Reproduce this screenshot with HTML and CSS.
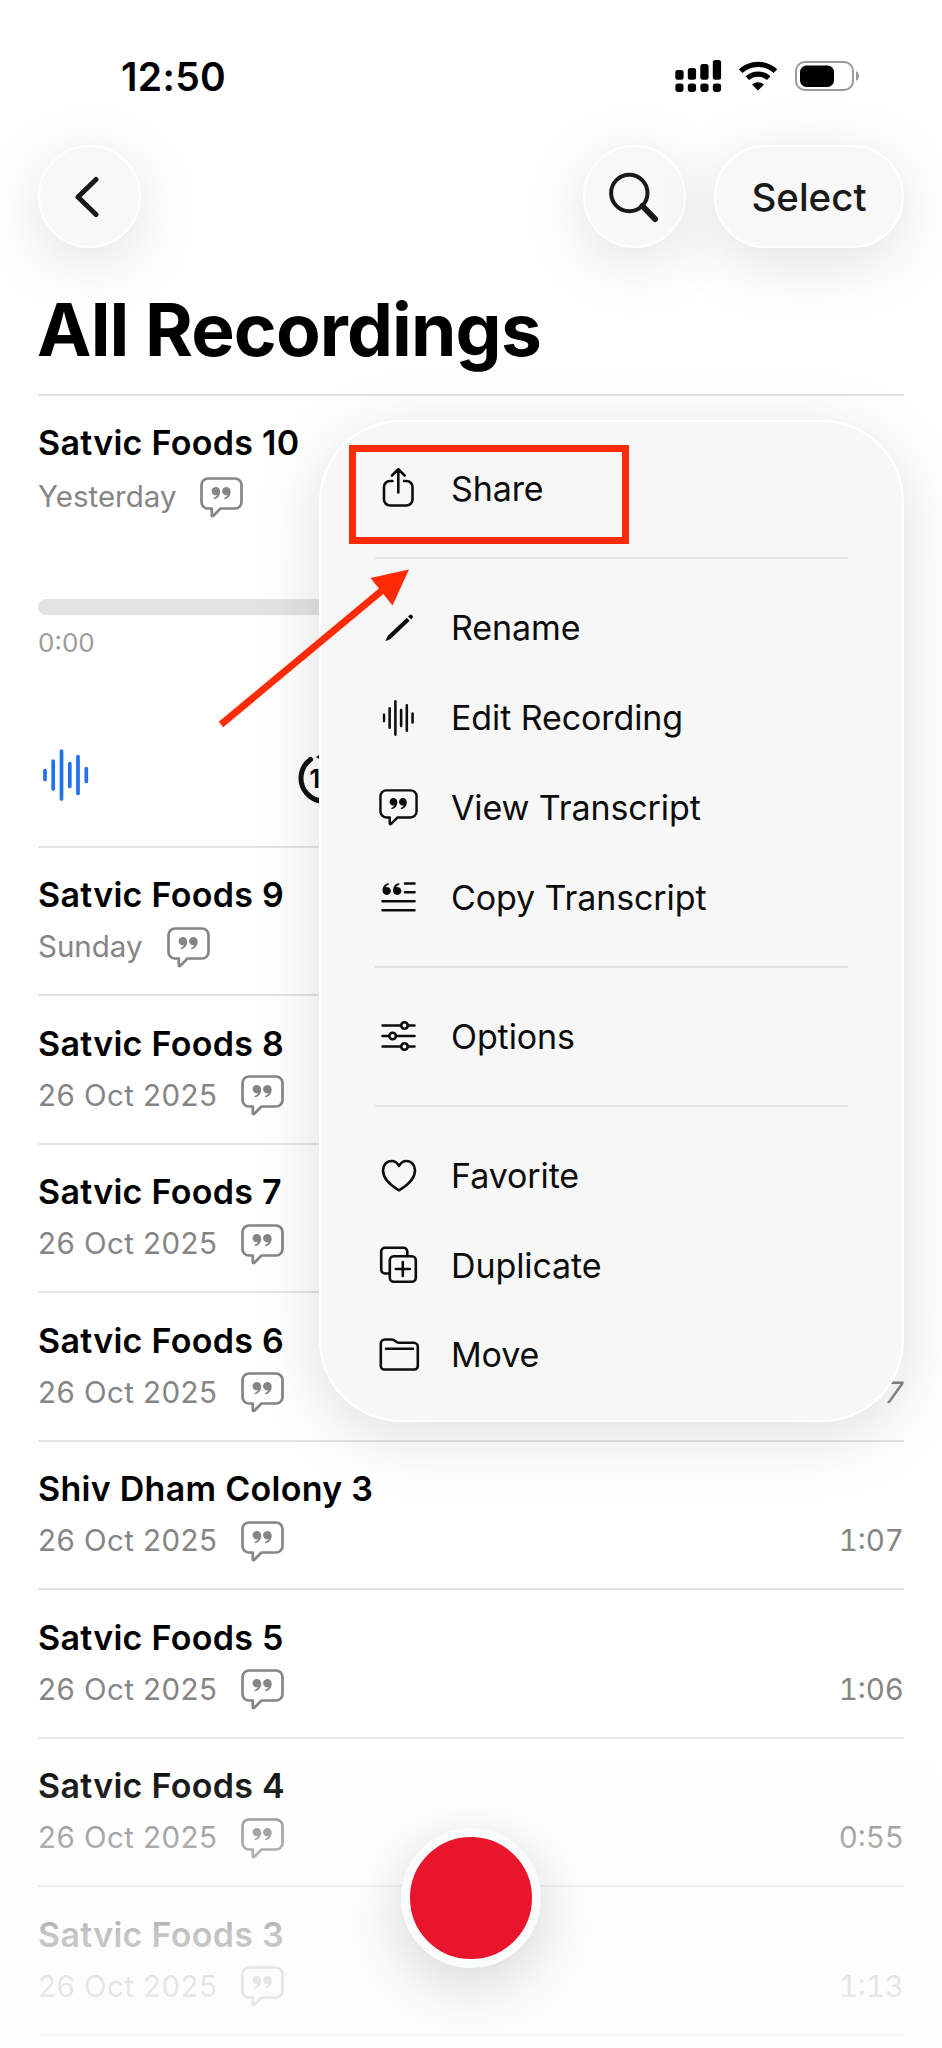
FILE: index.html
```html
<!DOCTYPE html>
<html lang="en">
<head>
    <meta charset="UTF-8">
    <meta name="viewport" content="width=device-width, initial-scale=1.0">
    <title>All Recordings</title>
    <link rel="stylesheet" href="styles.css">
</head>
<body>
    <svg class="symbols" width="0" height="0">
        <symbol id="quote" viewBox="0 0 10 14">
            <path d="M4.6 1a4 4 0 1 0 1.3 7.8c-.5 1.3-1.5 2-2.8 2.5-1 .4-.7 1.6.3 1.4C6.8 12 9 9.200 9 5.400 9 2.700 7.200 1 4.600 1z" fill="currentColor"/>
        </symbol>
        <symbol id="transcript" viewBox="0 0 43 41">
            <path d="M8 1.500h27a6.500 6.500 0 0 1 6.500 6.500v17a6.500 6.500 0 0 1-6.500 6.500H20.500l-7.200 7.200c-.8.7-1.500.5-1.500-.5V31.500H8A6.500 6.500 0 0 1 1.500 25V8A6.500 6.500 0 0 1 8 1.500z" fill="none" stroke="currentColor" stroke-width="2.700" stroke-linejoin="round"/>
            <use href="#quote" x="10.800" y="9" width="10.500" height="14.500"/>
            <use href="#quote" x="21.300" y="9" width="10.500" height="14.500"/>
        </symbol>
        <symbol id="wave" viewBox="0 0 46 52">
            <path d="M2 21.500v9M10.200 12v28M18.500 2v48M26.800 14.500v23M35 7.500v37M43.300 19.500v13" fill="none" stroke="currentColor" stroke-width="3.700" stroke-linecap="round"/>
        </symbol>
    </svg>

    <div class="phone">
        <div class="status-bar">
            <span class="time">12:50</span>
            <svg class="status-icons" width="186" height="34" viewBox="0 0 186 34">
                <g>
                    <rect x="0.300" y="11" width="8.300" height="9.700" rx="2.500"/>
                    <rect x="12.800" y="9" width="8.300" height="11.700" rx="2.500"/>
                    <rect x="25.300" y="5" width="8.300" height="15.700" rx="2.500"/>
                    <rect x="37.800" y="1" width="8.300" height="19.700" rx="2.500"/>
                    <rect x="0.300" y="24.600" width="8.300" height="8.300" rx="2.800"/>
                    <rect x="12.800" y="24.600" width="8.300" height="8.300" rx="2.800"/>
                    <rect x="25.300" y="24.600" width="8.300" height="8.300" rx="2.800"/>
                    <rect x="37.800" y="24.600" width="8.300" height="8.300" rx="2.800"/>
                </g>
                <path d="M65.600 12.200a25.500 25.500 0 0 1 34.800 0M72.300 19.200a15.800 15.800 0 0 1 21.400 0" fill="none" stroke="#000" stroke-width="5.200"/>
                <path d="M83 31.400l-6-6a9.500 9.500 0 0 1 12 0z"/>
                <rect x="121" y="3" width="57" height="28" rx="9" fill="none" stroke="#999" stroke-width="2"/>
                <rect x="125" y="6.500" width="34" height="21.500" rx="6.500"/>
                <path d="M181 12.200v9.600c4-1.800 4-7.800 0-9.600z" fill="#999"/>
            </svg>
        </div>

        <div class="nav">
            <div class="glass round">
                <svg width="26" height="42" viewBox="0 0 26 42">
                    <path d="M22 3.500L4 21l18 17.500" fill="none" stroke="#1a1a1a" stroke-width="5" stroke-linecap="round" stroke-linejoin="round"/>
                </svg>
            </div>
            <div class="nav-right">
                <div class="glass round">
                    <svg width="52" height="52" viewBox="0 0 52 52">
                        <circle cx="21.300" cy="22" r="18.200" fill="none" stroke="#1a1a1a" stroke-width="4"/>
                        <path d="M34.500 35l12.500 13" stroke="#1a1a1a" stroke-width="6" stroke-linecap="round"/>
                    </svg>
                </div>
                <div class="glass select">Select</div>
            </div>
        </div>

        <h1>All Recordings</h1>

        <div class="list">
            <div class="row open">
                <div class="name">Satvic Foods 10</div>
                <div class="meta">
                    <span class="date day">Yesterday</span>
                    <svg class="bubble"><use href="#transcript"/></svg>
                </div>
                <div class="slider"></div>
                <div class="elapsed">0:00</div>
                <div class="controls">
                    <svg class="wave"><use href="#wave"/></svg>
                    <svg class="skip" width="56" height="56" viewBox="0 0 56 56">
                        <path d="M14.500 7.500A23 23 0 1 0 41.500 7.500" fill="none" stroke="#111" stroke-width="5" stroke-linecap="round"/>
                        <path d="M20 5l8-5v10z" fill="#111"/>
                        <text x="13.500" y="35.500">15</text>
                    </svg>
                </div>
            </div>
            <div class="row">
                <div class="name">Satvic Foods 9</div>
                <div class="meta">
                    <span class="date day">Sunday</span>
                    <svg class="bubble"><use href="#transcript"/></svg>
                </div>
            </div>
            <div class="row">
                <div class="name">Satvic Foods 8</div>
                <div class="meta">
                    <span class="date">26 Oct 2025</span>
                    <svg class="bubble"><use href="#transcript"/></svg>
                </div>
            </div>
            <div class="row">
                <div class="name">Satvic Foods 7</div>
                <div class="meta">
                    <span class="date">26 Oct 2025</span>
                    <svg class="bubble"><use href="#transcript"/></svg>
                </div>
            </div>
            <div class="row">
                <div class="name">Satvic Foods 6</div>
                <div class="meta">
                    <span class="date">26 Oct 2025</span>
                    <svg class="bubble"><use href="#transcript"/></svg>
                    <span class="length bent">7</span>
                </div>
            </div>
            <div class="row">
                <div class="name">Shiv Dham Colony 3</div>
                <div class="meta">
                    <span class="date">26 Oct 2025</span>
                    <svg class="bubble"><use href="#transcript"/></svg>
                    <span class="length">1:07</span>
                </div>
            </div>
            <div class="row">
                <div class="name">Satvic Foods 5</div>
                <div class="meta">
                    <span class="date">26 Oct 2025</span>
                    <svg class="bubble"><use href="#transcript"/></svg>
                    <span class="length">1:06</span>
                </div>
            </div>
            <div class="row">
                <div class="name">Satvic Foods 4</div>
                <div class="meta">
                    <span class="date">26 Oct 2025</span>
                    <svg class="bubble"><use href="#transcript"/></svg>
                    <span class="length">0:55</span>
                </div>
            </div>
            <div class="row">
                <div class="name">Satvic Foods 3</div>
                <div class="meta">
                    <span class="date">26 Oct 2025</span>
                    <svg class="bubble"><use href="#transcript"/></svg>
                    <span class="length">1:13</span>
                </div>
            </div>
        </div>

        <div class="fade"></div>
        <div class="record"></div>

        <div class="menu">
            <div class="item">
                <svg class="icon" viewBox="0 0 42 42">
                    <path d="M14.500 13H12a6 6 0 0 0-6 6v12.500a6 6 0 0 0 6 6h16.500a6 6 0 0 0 6-6V19a6 6 0 0 0-6-6H26M20.300 24.500V2M14 7.500l6.300-6.300 6.300 6.300"/>
                </svg>
                <span>Share</span>
            </div>
            <hr>
            <div class="item">
                <svg class="icon solid" viewBox="0 0 42 42">
                    <path d="M7.500 34.300l2-5.300L28.800 10.700l2.900 3L12.500 32z"/>
                    <path d="M30 9.500l1.300-1.300a2.200 2.200 0 0 1 3.100 3.100L33.100 12.600z"/>
                </svg>
                <span>Rename</span>
            </div>
            <div class="item">
                <svg class="icon" viewBox="0 0 42 42"><use href="#wave" x="4.500" y="3" width="32" height="36"/></svg>
                <span>Edit Recording</span>
            </div>
            <div class="item">
                <svg class="icon" viewBox="0 0 42 42"><use href="#transcript" x="1" y="3" width="39" height="37"/></svg>
                <span>View Transcript</span>
            </div>
            <div class="item">
                <svg class="icon" viewBox="0 0 42 42">
                    <use href="#quote" x="-13.500" y="-20" width="10" height="14" transform="rotate(180)"/>
                    <use href="#quote" x="-24" y="-20" width="10" height="14" transform="rotate(180)"/>
                    <path d="M27 7.500h9.500M27 16.300h9.500M4.500 25.300h32M4.500 34.200h32"/>
                </svg>
                <span>Copy Transcript</span>
            </div>
            <hr>
            <div class="item">
                <svg class="icon" viewBox="0 0 42 42">
                    <path d="M4.500 10.500h18.500M30 10.500h6.500M4.500 21h6.500M18.500 21h18M4.500 31.500h18.500M30 31.500h6.500"/>
                    <circle cx="26.500" cy="10.500" r="3.300"/>
                    <circle cx="14.600" cy="21" r="3.300"/>
                    <circle cx="26.500" cy="31.500" r="3.300"/>
                </svg>
                <span>Options</span>
            </div>
            <hr>
            <div class="item">
                <svg class="icon" viewBox="0 0 42 42">
                    <path d="M21 36.300C12 31 5 24.500 5 16.500 5 11 8.800 7 13.500 7c3.300 0 5.900 1.900 7.500 5 1.600-3.100 4.200-5 7.500-5C33.200 7 37 11 37 16.500 37 24.500 30 31 21 36.300z"/>
                </svg>
                <span>Favorite</span>
            </div>
            <div class="item">
                <svg class="icon" viewBox="0 0 42 42">
                    <path d="M11.500 29.500H7A3.800 3.800 0 0 1 3.200 25.700V7.500A3.800 3.800 0 0 1 7 3.700h18.500a3.800 3.800 0 0 1 3.800 3.800V12"/>
                    <rect x="11.800" y="12.200" width="26" height="25.500" rx="4"/>
                    <path d="M24.800 18v14M17.800 25h14"/>
                </svg>
                <span>Duplicate</span>
            </div>
            <div class="item">
                <svg class="icon" viewBox="0 0 42 42">
                    <path d="M2.800 32V9.500a4 4 0 0 1 4-4h6.500c3.800 0 4.500 3.200 7.500 3.200h15a4 4 0 0 1 4 4V32a3.500 3.500 0 0 1-3.500 3.500H6.300A3.500 3.500 0 0 1 2.800 32zM8 14.800h27"/>
                </svg>
                <span>Move</span>
            </div>
        </div>

        <div class="highlight"></div>
        <svg class="arrow" width="192" height="160" viewBox="0 0 192 160">
            <path d="M3 156.500L167 20" stroke="#ff2a06" stroke-width="7"/>
            <path d="M191 1.500L152.500 10l22 27.500z" fill="#ff2a06"/>
        </svg>
    </div>
</body>
</html>
```
FILE: styles.css
```css
body {
    margin: 0;
    background-color: #ffffff;
    color: #000000;
    font-family: Inter, "Liberation Sans", sans-serif;
}

.symbols {
    position: absolute;
}

.phone {
    position: relative;
    width: 942px;
    height: 2048px;
    overflow: hidden;
}

/* Status bar */
.status-bar {
    display: flex;
    justify-content: space-between;
    box-sizing: border-box;
    height: 145px;
    padding: 56px 81px 0 121px;
}

.time {
    font-size: 39px;
    font-weight: 600;
    line-height: 41px;
    letter-spacing: 0.3px;
}

.status-icons {
    margin-top: 3px;
}

/* Navigation */
.nav {
    display: flex;
    justify-content: space-between;
    padding: 0 38px;
}

.nav-right {
    display: flex;
    gap: 28px;
}

.glass {
    display: flex;
    align-items: center;
    justify-content: center;
    box-sizing: border-box;
    height: 103px;
    border: 2px solid #ffffff;
    border-radius: 52px;
    background-color: #f8f8f8;
    box-shadow: 0 14px 66px rgba(0, 0, 0, 0.12);
}

.round {
    width: 103px;
}

.round svg {
    margin-right: 6px;
}

.nav-right .round svg {
    margin-right: 2px;
}

.select {
    width: 190px;
    color: #1a1a1a;
    font-size: 38.5px;
    font-weight: 500;
}

h1 {
    margin: 0 38px;
    padding: 45px 0 28px;
    border-bottom: 2px solid #e4e4e4;
    font-size: 73px;
    font-weight: 700;
    line-height: 73px;
    letter-spacing: -0.85px;
    text-indent: -1px;
}

/* Recordings */
.list {
    padding: 0 38px;
}

.row {
    box-sizing: border-box;
    height: 148.5px;
    padding-top: 27.500px;
    border-bottom: 2px solid #e4e4e4;
}

.row.open {
    height: 451.5px;
    padding-top: 27px;
}

.name {
    font-size: 34px;
    font-weight: 600;
    line-height: 40px;
    letter-spacing: 0.28px;
}

.meta {
    display: flex;
    align-items: center;
    height: 40px;
    margin-top: 12px;
    color: #858585;
}

.open .meta {
    margin-top: 14px;
}

.date,
.length {
    padding-bottom: 2px;
    font-size: 29.500px;
    line-height: 38px;
}

.date {
    letter-spacing: 0.45px;
}

.day {
    letter-spacing: 0;
}

.length {
    margin-left: auto;
    font-variant-numeric: tabular-nums;
}

.bent {
    transform: skewX(-12deg);
}

.bubble {
    width: 43px;
    height: 41px;
    margin-left: 24px;
}

.slider {
    height: 16px;
    margin-top: 82px;
    border-radius: 8px;
    background-color: #e3e3e3;
}

.elapsed {
    margin-top: 13px;
    color: #9c9c9c;
    font-size: 26px;
    line-height: 30px;
}

.controls {
    display: flex;
    align-items: center;
    height: 60px;
    margin-top: 87px;
    padding-left: 5px;
}

.wave {
    width: 46px;
    height: 52px;
    color: #2470ea;
}

.skip {
    margin: 10px 0 0 207px;
}

.skip text {
    font-size: 25px;
    font-weight: 600;
}

.fade {
    position: absolute;
    left: 0;
    bottom: 0;
    width: 100%;
    height: 308px;
    background: linear-gradient(rgba(252, 252, 252, 0), rgba(252, 252, 252, 0.1) 45px, rgba(252, 252, 252, 0.29) 98px, rgba(252, 252, 252, 0.78) 194px, rgba(252, 252, 252, 0.82) 250px, rgba(252, 252, 252, 0.83));
}

.record {
    position: absolute;
    left: 401px;
    bottom: 80px;
    box-sizing: border-box;
    width: 140px;
    height: 140px;
    border: 9px solid #fafbfb;
    border-radius: 50%;
    background-color: #e9152d;
    box-shadow: 0 14px 60px rgba(0, 0, 0, 0.16);
}

/* Context menu */
.menu {
    position: absolute;
    top: 420px;
    left: 319px;
    box-sizing: border-box;
    width: 585px;
    height: 1002px;
    padding: 22px 54px;
    border: 2px solid #ffffff;
    border-radius: 82px;
    background-color: #f7f7f7;
    box-shadow: 0 14px 70px rgba(0, 0, 0, 0.13);
}

.menu hr {
    height: 2px;
    margin: 23.600px 0;
    border: none;
    background-color: #e3e3e3;
}

.item {
    display: flex;
    align-items: center;
    height: 89.800px;
    padding-left: 3px;
    color: #0d0d0d;
    font-size: 34px;
    letter-spacing: -0.1px;
}

.icon {
    width: 42px;
    height: 42px;
    margin-right: 31px;
    fill: none;
    stroke: currentColor;
    stroke-width: 2.600;
    stroke-linecap: round;
    stroke-linejoin: round;
}

.icon use {
    stroke: none;
}

.icon.solid {
    fill: currentColor;
    stroke: none;
}

/* Annotations */
.highlight {
    position: absolute;
    top: 445px;
    left: 349px;
    box-sizing: border-box;
    width: 280px;
    height: 99px;
    border: 7px solid #ff2a06;
}

.arrow {
    position: absolute;
    top: 568px;
    left: 218px;
}
```
